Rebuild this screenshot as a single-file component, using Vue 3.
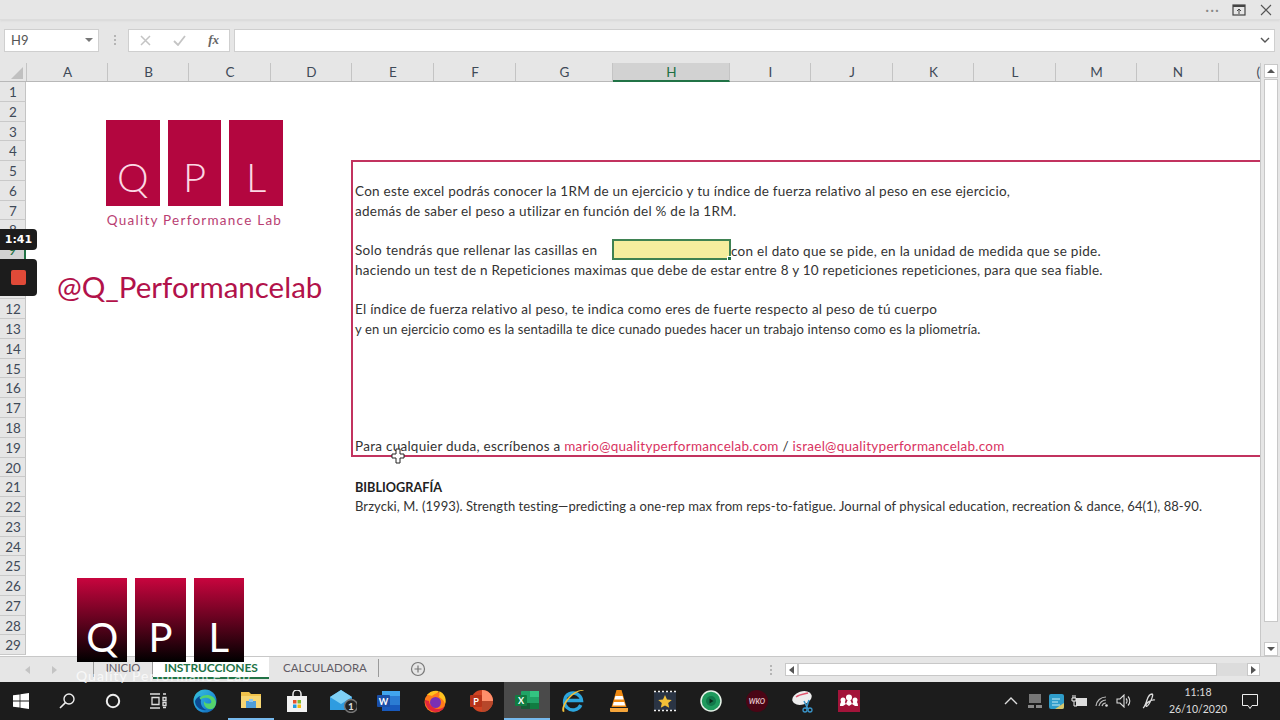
<script setup>
const columns = [
  { name: 'A', w: 81 }, { name: 'B', w: 81 }, { name: 'C', w: 82 }, { name: 'D', w: 81 },
  { name: 'E', w: 82 }, { name: 'F', w: 82 }, { name: 'G', w: 97 }, { name: 'H', w: 117, active: true },
  { name: 'I', w: 81 }, { name: 'J', w: 82 }, { name: 'K', w: 81 }, { name: 'L', w: 82 },
  { name: 'M', w: 81 }, { name: 'N', w: 82 }, { name: 'O', w: 41, clip: true }
]
const rows = Array.from({ length: 29 }, (_, i) => i + 1)
const lines = [
  { row: 6, text: 'Con este excel podrás conocer la 1RM de un ejercicio y tu índice de fuerza relativo al peso en ese ejercicio,' },
  { row: 7, text: 'además de saber el peso a utilizar en función del % de la 1RM.' },
  { row: 9, text: 'Solo tendrás que rellenar las casillas en', wide: true },
  { row: 10, text: 'haciendo un test de n Repeticiones maximas que debe de estar entre 8 y 10 repeticiones repeticiones, para que sea fiable.' },
  { row: 12, text: 'El índice de fuerza relativo al peso, te indica como eres de fuerte respecto al peso de tú cuerpo' },
  { row: 13, text: 'y en un ejercicio como es la sentadilla te dice cunado puedes hacer un trabajo intenso como es la pliometría.', small: true },
  { row: 22, text: 'Brzycki, M. (1993). Strength testing—predicting a one-rep max from reps-to-fatigue. Journal of physical education, recreation & dance, 64(1), 88-90.', ref: true }
]
</script>

<template>
  <div class="window">
    <header class="titlebar">
      <span class="dots">···</span>
      <svg class="tb-icon" width="14" height="12" viewBox="0 0 14 12"><rect x="1" y="1" width="12" height="10" fill="none" stroke="#444" stroke-width="1.2"/><rect x="1" y="1" width="12" height="2" fill="#444"/><path d="M7 10V5M5 7l2-2 2 2" fill="none" stroke="#444"/></svg>
      <svg class="tb-icon close" width="12" height="12" viewBox="0 0 12 12"><path d="M1 1l10 10M11 1L1 11" stroke="#555" stroke-width="1.1"/></svg>
    </header>

    <section class="formula">
      <div class="namebox"><span>H9</span><i class="caret"></i></div>
      <div class="grip"></div>
      <div class="fx-buttons">
        <svg width="11" height="11" viewBox="0 0 11 11"><path d="M1 1l9 9M10 1l-9 9" stroke="#c4c4c4" stroke-width="1.5"/></svg>
        <svg width="13" height="11" viewBox="0 0 13 11"><path d="M1 6l4 4 7-9" fill="none" stroke="#c4c4c4" stroke-width="1.8"/></svg>
        <span class="fx">fx</span>
      </div>
      <div class="input">
        <svg width="10" height="6" viewBox="0 0 10 6"><path d="M1 1l4 4 4-4" fill="none" stroke="#555" stroke-width="1.4"/></svg>
      </div>
    </section>

    <main class="workarea">
      <div class="sheet-wrap">
        <div class="col-head">
          <div class="corner"><i></i></div>
          <div
            v-for="c in columns"
            :key="c.name"
            class="col"
            :class="{ active: c.active, clip: c.clip }"
            :style="{ width: c.w + 'px' }"
          >{{ c.clip ? '(' : c.name }}</div>
        </div>
        <div class="sheet">
          <div
            v-for="r in rows"
            :key="r"
            class="rowhead"
            :class="{ active: r === 9 }"
            :style="{ gridRow: r }"
          >{{ r }}</div>

          <div class="redbox"></div>
          <div
            v-for="l in lines"
            :key="l.row"
            class="line"
            :class="{ small: l.small, ref: l.ref, wide: l.wide }"
            :style="{ gridRow: l.row }"
          >{{ l.text }}</div>

          <div class="selected"><i></i></div>
          <div class="after-cell">con el dato que se pide, en la unidad de medida que se pide.</div>

          <div class="line contact">Para cualquier duda, escríbenos a <span class="mail">mario@qualityperformancelab.com</span> / <span class="mail">israel@qualityperformancelab.com</span></div>
          <div class="line biblio">BIBLIOGRAFÍA</div>

          <div class="logo">
            <div class="blocks">
              <div>Q</div><div>P</div><div>L</div>
            </div>
            <div class="caption">Quality Performance Lab</div>
          </div>
          <div class="handle">@Q_Performancelab</div>

          <div class="logo2">
            <div class="blocks2">
              <div>Q</div><div>P</div><div>L</div>
            </div>
          </div>

          <svg class="cursor" width="14" height="16" viewBox="0 0 14 16"><path d="M5 1h4v5h4v4H9v5H5v-5H1V6h4z" fill="#fff" stroke="#222" stroke-width="1"/></svg>
        </div>
      </div>
      <aside class="vscroll">
        <button class="sb"><i class="up"></i></button>
        <div class="vthumb"></div>
        <div class="vtrack"></div>
        <button class="sb"><i class="down"></i></button>
      </aside>
    </main>

    <footer class="tabbar">
      <div class="nav"><i class="left"></i><i class="right"></i></div>
      <div class="tabs">
        <div class="tab inicio">INICIO</div>
        <div class="tab active">INSTRUCCIONES</div>
        <div class="tab calc">CALCULADORA</div>
        <svg class="plus" width="16" height="16" viewBox="0 0 16 16"><circle cx="8" cy="8" r="6.5" fill="none" stroke="#777" stroke-width="1.2"/><path d="M8 4.5v7M4.5 8h7" stroke="#777" stroke-width="1.2"/></svg>
      </div>
      <div class="hgrip"></div>
      <div class="hscroll">
        <button class="sb small"><i class="left dark"></i></button>
        <div class="hthumb"></div>
        <div class="htrack"></div>
        <button class="sb small"><i class="right dark"></i></button>
      </div>
      <div class="faint">Quality Performance Lab</div>
    </footer>

    <nav class="taskbar">
      <div class="task-left">
        <div class="tbtn">
          <svg width="16" height="16" viewBox="0 0 16 16"><path d="M0 2.3l6.6-.9v6.2H0zM7.4 1.3L16 0v7.6H7.4zM0 8.4h6.6v6.2L0 13.7zM7.4 8.4H16V16l-8.6-1.2z" fill="#fff"/></svg>
        </div>
        <div class="tbtn">
          <svg width="18" height="18" viewBox="0 0 18 18"><circle cx="11" cy="7" r="5" fill="none" stroke="#eee" stroke-width="1.4"/><path d="M7.4 10.6L2 16" stroke="#eee" stroke-width="1.6"/></svg>
        </div>
        <div class="tbtn narrow">
          <svg width="16" height="16" viewBox="0 0 16 16"><circle cx="8" cy="8" r="6.2" fill="none" stroke="#eee" stroke-width="2"/></svg>
        </div>
        <div class="tbtn narrow">
          <svg width="18" height="16" viewBox="0 0 18 16"><path d="M1 1h10M1 15h10M3 4.500h7v7H3zM14 1h3M14 4.500h3v3h-3zM14 9.500h3v3h-3zM14 14.500h3" fill="none" stroke="#ddd" stroke-width="1.3"/></svg>
        </div>
        <div class="tbtn edge">
          <svg width="24" height="24" viewBox="0 0 24 24"><defs><linearGradient id="edge1" x1="0" y1="0" x2="1" y2="1"><stop offset="0" stop-color="#38c6d8"/><stop offset=".6" stop-color="#1f8fd8"/><stop offset="1" stop-color="#0c59a4"/></linearGradient></defs><circle cx="12" cy="12" r="11.500" fill="url(#edge1)"/><path d="M23 13c-1-5-5-7-9-7-5 0-8 3-8 6 2-3 6-4 9-3 3 1 4 3 3 5-2 1-6 1-7-2-1 5 3 9 8 8 3-1 4-4 4-7z" fill="#54d36c"/><path d="M8 11c-1 5 2 9 6 10-6 1-12-3-12-9 1-3 4-5 6-5-2 1-2 2 0 4z" fill="#0b4a93"/></svg>
        </div>
        <div class="tbtn running">
          <svg width="22" height="20" viewBox="0 0 22 20"><path d="M1 2h8l2 2h10v14H1z" fill="#f0c24b"/><rect x="1" y="6" width="20" height="12" fill="#f7d774"/><rect x="6" y="11" width="10" height="7" fill="#4f9ed8"/><rect x="9" y="9" width="4" height="3" fill="#8ec6ec"/></svg>
        </div>
        <div class="tbtn">
          <svg width="22" height="23" viewBox="0 0 22 23"><path d="M7 7V4a4 4 0 018 0v3" fill="none" stroke="#eee" stroke-width="1.500"/><rect x="1" y="6" width="20" height="16" fill="#f2f2f2"/><rect x="7" y="10" width="3.500" height="3.500" fill="#e8512a"/><rect x="11.500" y="10" width="3.500" height="3.500" fill="#7cb82f"/><rect x="7" y="14.500" width="3.500" height="3.500" fill="#1e9be0"/><rect x="11.500" y="14.500" width="3.500" height="3.500" fill="#f5b90f"/></svg>
        </div>
        <div class="tbtn">
          <svg width="28" height="24" viewBox="0 0 28 24"><path d="M1 8l11-7 11 7v13H1z" fill="#2f9ce0"/><path d="M1 8l11 7 11-7-11-7z" fill="#7fd0f5"/><circle cx="22" cy="17" r="6.500" fill="#222" stroke="#777" stroke-width="1.400"/><text x="22" y="21" text-anchor="middle" class="badge">1</text></svg>
        </div>
        <div class="tbtn">
          <svg width="24" height="22" viewBox="0 0 24 22"><rect x="5" y="1" width="18" height="20" rx="1.500" fill="#2b7cd3"/><rect x="5" y="1" width="18" height="5" fill="#41a5ee"/><rect x="5" y="15" width="18" height="6" fill="#185abd"/><rect x="0" y="5" width="13" height="12" rx="1" fill="#1a4fa8"/><text x="6.500" y="14.500" text-anchor="middle" class="ms">W</text></svg>
        </div>
        <div class="tbtn">
          <svg width="24" height="24" viewBox="0 0 24 24"><circle cx="12" cy="13" r="10.500" fill="#ff7a1a"/><path d="M4 6c4-5 13-6 17 0 2 3 2 6 1 9-1-4-4-6-6-7 1-2 0-5 0-6-1 2-5 3-7 5-2-1-3-1-5-1z" fill="#ffc11f"/><circle cx="12.500" cy="13.500" r="5.500" fill="#7a2fb5"/><path d="M2 11c0 7 5 12 11 12 4 0 7-2 9-6-3 3-7 4-11 2-3-2-5-4-5-7z" fill="#e3263c"/></svg>
        </div>
        <div class="tbtn">
          <svg width="24" height="24" viewBox="0 0 24 24"><circle cx="13" cy="12" r="11" fill="#d04423"/><path d="M13 1a11 11 0 0111 11H13z" fill="#ff8f6b"/><path d="M13 12h11a11 11 0 01-11 11z" fill="#b7472a"/><rect x="1" y="6" width="12" height="12" rx="1" fill="#b7341a"/><text x="7" y="15.500" text-anchor="middle" class="ms">P</text></svg>
        </div>
        <div class="tbtn excel">
          <svg width="24" height="20" viewBox="0 0 24 20"><rect x="6" y="1" width="18" height="18" rx="1" fill="#21a366"/><rect x="15" y="1" width="9" height="6" fill="#33c481"/><rect x="15" y="13" width="9" height="6" fill="#107c41"/><rect x="6" y="13" width="9" height="6" fill="#185c37"/><rect x="0" y="5" width="12" height="11" rx="1" fill="#107c41"/><text x="6" y="14" text-anchor="middle" class="ms">X</text></svg>
        </div>
        <div class="tbtn">
          <svg width="24" height="24" viewBox="0 0 24 24"><path d="M19.800 16A8.500 8.500 0 1 1 20.500 11.500H5" fill="none" stroke="#2ca6de" stroke-width="3.400"/><path d="M2 23C-1 20 5 8 14 3c4-2 8-3 9-1-2-1-6 0-11 4C6 11 2 18 3.500 22.500z" fill="#f3c23c"/></svg>
        </div>
        <div class="tbtn">
          <svg width="20" height="24" viewBox="0 0 20 24"><path d="M7.500 1h5l5 17h-15z" fill="#f08a12"/><path d="M6.400 7h7.200l1 3.500h-9.200z" fill="#fff"/><path d="M4.800 13h10.400l1 3.500H3.800z" fill="#fff"/><path d="M1 19h18v3a1 1 0 01-1 1H2a1 1 0 01-1-1z" fill="#f5a53a"/></svg>
        </div>
        <div class="tbtn">
          <svg width="24" height="22" viewBox="0 0 24 22"><rect x="1" y="2" width="22" height="18" fill="#2a3444"/><path d="M1 1.500h22M1 20.500h22" stroke="#eee" stroke-width="1.500" stroke-dasharray="2 2"/><path d="M12 5l2 4.400 4.800.5-3.600 3.200 1 4.700L12 15.400l-4.200 2.400 1-4.700-3.600-3.200 4.800-.5z" fill="#f2c038"/></svg>
        </div>
        <div class="tbtn">
          <svg width="22" height="22" viewBox="0 0 22 22"><circle cx="11" cy="11" r="10" fill="#1f9a5d" stroke="#e6f2e8" stroke-width="1.500"/><circle cx="11" cy="11" r="5" fill="#11774a"/><path d="M9.500 8.500l4 2.500-4 2.500z" fill="#0b2a1a"/></svg>
        </div>
        <div class="tbtn">
          <svg width="24" height="24" viewBox="0 0 24 24"><circle cx="12" cy="12" r="11" fill="#4a0515"/><text x="12" y="15" text-anchor="middle" class="wko">WKO</text></svg>
        </div>
        <div class="tbtn">
          <svg width="24" height="24" viewBox="0 0 24 24"><ellipse cx="11" cy="9" rx="10" ry="6.500" transform="rotate(-18 11 9)" fill="#eee"/><path d="M5 8c4-3 9-3 12-4" stroke="#e2566f" stroke-width="1.500" fill="none"/><path d="M13 12l4 8M18 11l-3 9" stroke="#3a94c8" stroke-width="1.600"/><circle cx="14" cy="21" r="2" fill="none" stroke="#3a94c8" stroke-width="1.300"/><circle cx="19" cy="21" r="2" fill="none" stroke="#3a94c8" stroke-width="1.300"/></svg>
        </div>
        <div class="tbtn">
          <svg width="24" height="24" viewBox="0 0 24 24"><rect x="1" y="1" width="22" height="22" fill="#a3143a"/><circle cx="12" cy="8.500" r="3" fill="#fff"/><circle cx="6" cy="11" r="2.500" fill="#fff"/><circle cx="18" cy="11" r="2.500" fill="#fff"/><path d="M3 17c0-4 2-5 3-5s2 1 3 3c1-3 2-5 3-5s2 2 3 5c1-2 2-3 3-3s3 1 3 5h-3l-3-2-3 2-3-2-3 2z" fill="#fff"/></svg>
        </div>
      </div>

      <div class="tray">
        <svg width="14" height="8" viewBox="0 0 14 8"><path d="M1 7l6-6 6 6" fill="none" stroke="#ddd" stroke-width="1.400"/></svg>
        <svg class="t-net" width="14" height="14" viewBox="0 0 14 14"><rect x="1" y="0" width="12" height="9" fill="#777"/><rect x="0" y="11" width="6" height="3" fill="#888"/><rect x="8" y="11" width="6" height="3" fill="#888"/></svg>
        <svg width="15" height="15" viewBox="0 0 15 15"><rect x="0" y="0" width="15" height="15" rx="2" fill="#2f9cc9"/><path d="M3 5h8M3 8h6M3 11h8" stroke="#c7edf5" stroke-width="1"/><path d="M15 9v4a2 2 0 01-2 2H6z" fill="#d7c66a"/></svg>
        <svg width="16" height="12" viewBox="0 0 16 12"><rect x="5" y="3" width="11" height="8" fill="#ddd"/><path d="M2 0v3M4 0v3M1 3h4v3H1zM3 6v5h3" stroke="#eee" fill="none"/></svg>
        <svg class="t-wifi" width="14" height="12" viewBox="0 0 14 12"><path d="M1 11A10 10 0 0111 2M4 11A7 7 0 0111 5M7 11a4 4 0 014-3" fill="none" stroke="#bbb" stroke-width="1.200"/><circle cx="11.500" cy="10.500" r="1.300" fill="#ddd"/></svg>
        <svg width="16" height="14" viewBox="0 0 16 14"><path d="M1 5h3l4-4v12L4 9H1z" fill="none" stroke="#ddd" stroke-width="1.100"/><path d="M10 4.500a3.500 3.500 0 010 5M12 2.500a6.500 6.500 0 010 9" fill="none" stroke="#ddd" stroke-width="1.100"/></svg>
        <svg class="pen" width="16" height="16" viewBox="0 0 16 16"><path d="M1 15c2-1 3-5 4-8s3-6 5-6-1 7-3 10-3 3-3 1 6-6 9-5" fill="none" stroke="#ddd" stroke-width="1.300"/></svg>
        <div class="clock"><span>11:18</span><span>26/10/2020</span></div>
        <svg class="notif" width="16" height="15" viewBox="0 0 16 15"><path d="M.5.500h15v11H10l-2 3-2-3H.5z" fill="none" stroke="#eee" stroke-width="1"/></svg>
      </div>
    </nav>

    <div class="rec-time">1:41</div>
    <div class="rec-stop"><i></i></div>
  </div>
</template>

<style scoped>
.window {
  position: relative;
  width: 1280px;
  height: 720px;
  display: flex;
  flex-direction: column;
  overflow: hidden;
  background: #e6e6e6;
  font-family: Lato, "Liberation Sans", sans-serif;
  color: #333;
}
.titlebar {
  height: 19px;
  display: flex;
  align-items: center;
  justify-content: flex-end;
  padding-right: 8px;
  border-bottom: 1px solid #dcdcdc;
  box-shadow: 0 1px 2px #d8d8d8;
  flex: none;
}
.dots { color: #888; font-size: 15px; letter-spacing: 1px; margin-right: 12px; line-height: 19px; }
.tb-icon { margin-right: 14px; }
.tb-icon.close { margin-right: 0; }

.formula {
  height: 43px;
  flex: none;
  display: flex;
  align-items: center;
  padding: 0 5px 3px 4px;
  box-sizing: border-box;
}
.namebox, .fx-buttons, .input {
  height: 23px;
  box-sizing: border-box;
  background: #fff;
  border: 1px solid #cfcfcf;
  display: flex;
  align-items: center;
}
.namebox { width: 95px; padding: 0 5px 0 6px; justify-content: space-between; font-size: 13px; color: #555; }
.caret { border: 4px solid transparent; border-top: 4px solid #777; border-bottom: 0; }
.grip { width: 0; height: 10px; margin: 0 12px 0 15px; border-left: 2px dotted #b5b5b5; }
.fx-buttons { width: 102px; padding: 0 10px 0 11px; justify-content: space-between; margin-right: 4px; }
.fx { font-family: "Liberation Serif", serif; font-style: italic; color: #666; font-size: 13px; font-weight: 700; }
.input { flex: 1; justify-content: flex-end; padding-right: 4px; }

.workarea { position: relative; z-index: 1; flex: 1; display: flex; min-height: 0; background: #f3f3f3; }
.sheet-wrap { width: 1261px; flex: none; background: #fff; border-right: 1px solid #c8c8c8; box-sizing: border-box; }
.col-head { display: flex; height: 18px; background: #e6e6e6; border-bottom: 1px solid #b8b8b8; }
.corner { width: 27px; flex: none; position: relative; border-right: 1px solid #c4c4c4; box-sizing: border-box; }
.corner i { position: absolute; right: 3px; bottom: 2px; border-style: solid; border-width: 0 0 12px 12px; border-color: transparent transparent #c0c0c0 transparent; }
.col {
  flex: none;
  box-sizing: border-box;
  text-align: center;
  font-size: 13.500px;
  line-height: 18px;
  color: #3f4a58;
  padding-left: 1px;
  border-right: 1px solid #c4c4c4;
}
.col.active { background: #d2d2d2; border-bottom: 2px solid #217346; height: 19px; color: #1f6f43; }
.col.clip { text-align: right; border-right: 0; padding-right: 0; }

.sheet {
  position: relative;
  display: grid;
  grid-template-columns: 26px 326px 1fr;
  grid-template-rows: repeat(29, 19.78px);
  height: 574px;
}
.rowhead {
  grid-column: 1;
  background: #e6e6e6;
  border-right: 1px solid #c4c4c4;
  border-bottom: 1px solid #c9c9c9;
  box-sizing: border-box;
  text-align: center;
  font-size: 13.500px;
  line-height: 20px;
  color: #3f4a58;
  padding-left: 1px;
}
.rowhead.active { background: #d2d2d2; color: #1f6f43; border-right: 2px solid #217346; }

.redbox {
  grid-column: 3;
  grid-row: 5 / 20;
  border: solid #c2335f;
  border-width: 2px 0 2px 2px;
  box-sizing: border-box;
  margin: -1px 0 1px -1px;
}
.line {
  grid-column: 3;
  padding: 1px 0 0 3px;
  font-size: 13.500px;
  letter-spacing: .25px;
  line-height: 19.780px;
  color: #333;
  white-space: nowrap;
  z-index: 1;
}
.line.wide { letter-spacing: .33px; }
.line.small { font-size: 13px; letter-spacing: .12px; }
.line.ref { font-size: 13px; letter-spacing: .07px; padding-top: 0; }
.line.contact { grid-row: 19; padding-top: 0; margin-top: -1px; letter-spacing: .27px; }
.biblio { grid-row: 21; font-weight: 700; color: #222; font-size: 12.700px; letter-spacing: 0; }
.mail { color: #d9335f; }

.selected {
  grid-column: 3;
  grid-row: 9;
  margin: -1px 0 0 260px;
  width: 119px;
  height: 21px;
  box-sizing: border-box;
  background: #f6ee9e;
  border: 2px solid #3f8252;
  position: relative;
  z-index: 1;
}
.selected i { position: absolute; right: -3px; bottom: -3px; width: 5px; height: 5px; background: #217346; border: 1px solid #fff; box-sizing: border-box; }
.after-cell {
  grid-column: 3;
  grid-row: 9;
  margin-left: 379px;
  font-size: 13.500px;
  letter-spacing: .27px;
  line-height: 20px;
  padding-top: 1px;
  white-space: nowrap;
  z-index: 1;
}

.logo { position: absolute; left: 106px; top: 38px; width: 177px; }
.blocks { display: flex; gap: 8px; }
.blocks div {
  flex: 1;
  height: 86px;
  padding-bottom: 5px;
  box-sizing: border-box;
  display: flex;
  align-items: flex-end;
  justify-content: center;
  background: #b3063f;
  color: #fbd8e4;
  font-size: 40px;
  line-height: 48px;
  font-weight: 300;
}
.caption { font-size: 13.500px; color: #b93e72; text-align: center; margin-top: 6px; letter-spacing: 1.250px; white-space: nowrap; }
.handle { position: absolute; left: 57px; top: 187px; color: #b2124a; font-size: 29.500px; font-weight: 400; white-space: nowrap; line-height: 36px; }

.logo2 { position: absolute; left: 77px; top: 496px; width: 167px; z-index: 4; }
.blocks2 { display: flex; gap: 8px; }
.blocks2 div {
  flex: 1;
  height: 84px;
  padding-bottom: 1px;
  box-sizing: border-box;
  display: flex;
  align-items: flex-end;
  justify-content: center;
  background: linear-gradient(#c8053e, #000);
  color: #fff;
  font-size: 40px;
  line-height: 48px;
  font-weight: 400;
}
.cursor { position: absolute; left: 391px; top: 366px; z-index: 3; }

.vscroll { flex: 1; display: flex; flex-direction: column; padding: 1px 2px 0 3px; box-sizing: border-box; background: #e6e6e6; gap: 1px; }
.sb { width: 14px; height: 14px; padding: 0; border: 1px solid #c8c8c8; background: #fff; display: flex; align-items: center; justify-content: center; flex: none; }
.up { border: 4px solid transparent; border-bottom: 4px solid #555; border-top: 0; }
.down { border: 4px solid transparent; border-top: 4px solid #555; border-bottom: 0; }
.vthumb { height: 543px; background: #fff; border: 1px solid #c8c8c8; width: 14px; box-sizing: border-box; flex: none; }
.vtrack { flex: 1; }

.tabbar {
  position: relative;
  height: 26px;
  flex: none;
  display: flex;
  align-items: center;
  box-sizing: border-box;
  border-top: 1px solid #c8c8c8;
  background: #e6e6e6;
}
.nav { width: 93px; display: flex; padding-left: 25px; gap: 22px; box-sizing: border-box; flex: none; }
.left { border: 4px solid transparent; border-right: 5px solid #c4c4c4; border-left: 0; display: block; }
.right { border: 4px solid transparent; border-left: 5px solid #c4c4c4; border-right: 0; display: block; }
.left.dark { border-right-color: #555; }
.right.dark { border-left-color: #555; }
.tabs { display: flex; align-items: flex-start; width: 668px; flex: none; height: 100%; }
.tab { font-size: 11.300px; color: #5f5a63; text-align: center; line-height: 18px; box-sizing: border-box; margin-top: 2px; }
.tab.inicio { width: 60px; border-left: 1px solid #9a9a9a; border-right: 1px solid #9a9a9a; }
.tab.active {
  width: 116px;
  height: 22px;
  margin-top: 0;
  line-height: 22px;
  background: #fff;
  color: #217346;
  font-weight: 700;
  border-bottom: 2px solid #217346;
  font-size: 12px;
  letter-spacing: -.1px;
}
.tab.calc { width: 110px; padding-left: 3px; border-right: 1px solid #9a9a9a; font-size: 11.500px; }
.plus { margin-left: 31px; margin-top: 4px; }
.hgrip { width: 0; height: 10px; border-left: 2px dotted #b5b5b5; margin: 0 13px 0 9px; flex: none; }
.hscroll { display: flex; align-items: center; width: 475px; flex: none; }
.sb.small { width: 13px; height: 13px; }
.hthumb { width: 419px; height: 13px; background: #fff; border: 1px solid #c8c8c8; box-sizing: border-box; }
.htrack { flex: 1; height: 13px; background: #dcdcdc; }
.faint { position: absolute; left: 76px; top: 10px; color: rgba(255, 255, 255, .75); font-size: 14px; letter-spacing: 1px; white-space: nowrap; }

.taskbar {
  height: 38px;
  flex: none;
  display: flex;
  justify-content: space-between;
  background: #1c1c1c;
  color: #eee;
}
.task-left { display: flex; margin-left: -2px; }
.tbtn { width: 46px; height: 38px; display: flex; align-items: center; justify-content: center; box-sizing: border-box; flex: none; }
.tbtn.narrow { width: 45px; }
.tbtn.edge { margin-left: 2px; }
.tbtn.running { border-bottom: 2px solid #76b9ed; }
.tbtn.excel { background: #4a4a4a; border-bottom: 2px solid #76b9ed; }
.tray { display: flex; align-items: center; gap: 7px; padding-right: 22px; }
.t-net { margin-left: 3px; }
.t-wifi { margin-left: 1px; }
.pen { margin-left: 3px; }
.clock { display: flex; flex-direction: column; align-items: center; font-size: 10.500px; line-height: 17px; color: #ddd; width: 60px; margin-left: 3px; }
.notif { margin-left: 7px; }
.ms { font: 700 9px Lato, sans-serif; fill: #fff; }
.badge { font: 700 10px Lato, sans-serif; fill: #ddd; }
.wko { font: italic 700 7px Lato, sans-serif; fill: #e7c5cc; }

.rec-time {
  position: absolute;
  left: 0;
  top: 229px;
  width: 37px;
  height: 21px;
  background: #1c1c1c;
  border-radius: 0 4px 4px 0;
  color: #fff;
  font: 700 11px/21px "DejaVu Sans", sans-serif;
  text-align: center;
  z-index: 5;
}
.rec-stop {
  position: absolute;
  left: 0;
  top: 259px;
  width: 37px;
  height: 37px;
  background: #1c1c1c;
  border-radius: 0 4px 4px 0;
  display: flex;
  align-items: center;
  justify-content: center;
  z-index: 5;
}
.rec-stop i { width: 15px; height: 15px; background: #e04a38; border-radius: 2px; }
</style>

<style>
html, body { margin: 0; overflow: hidden; background: #e6e6e6; }
</style>
